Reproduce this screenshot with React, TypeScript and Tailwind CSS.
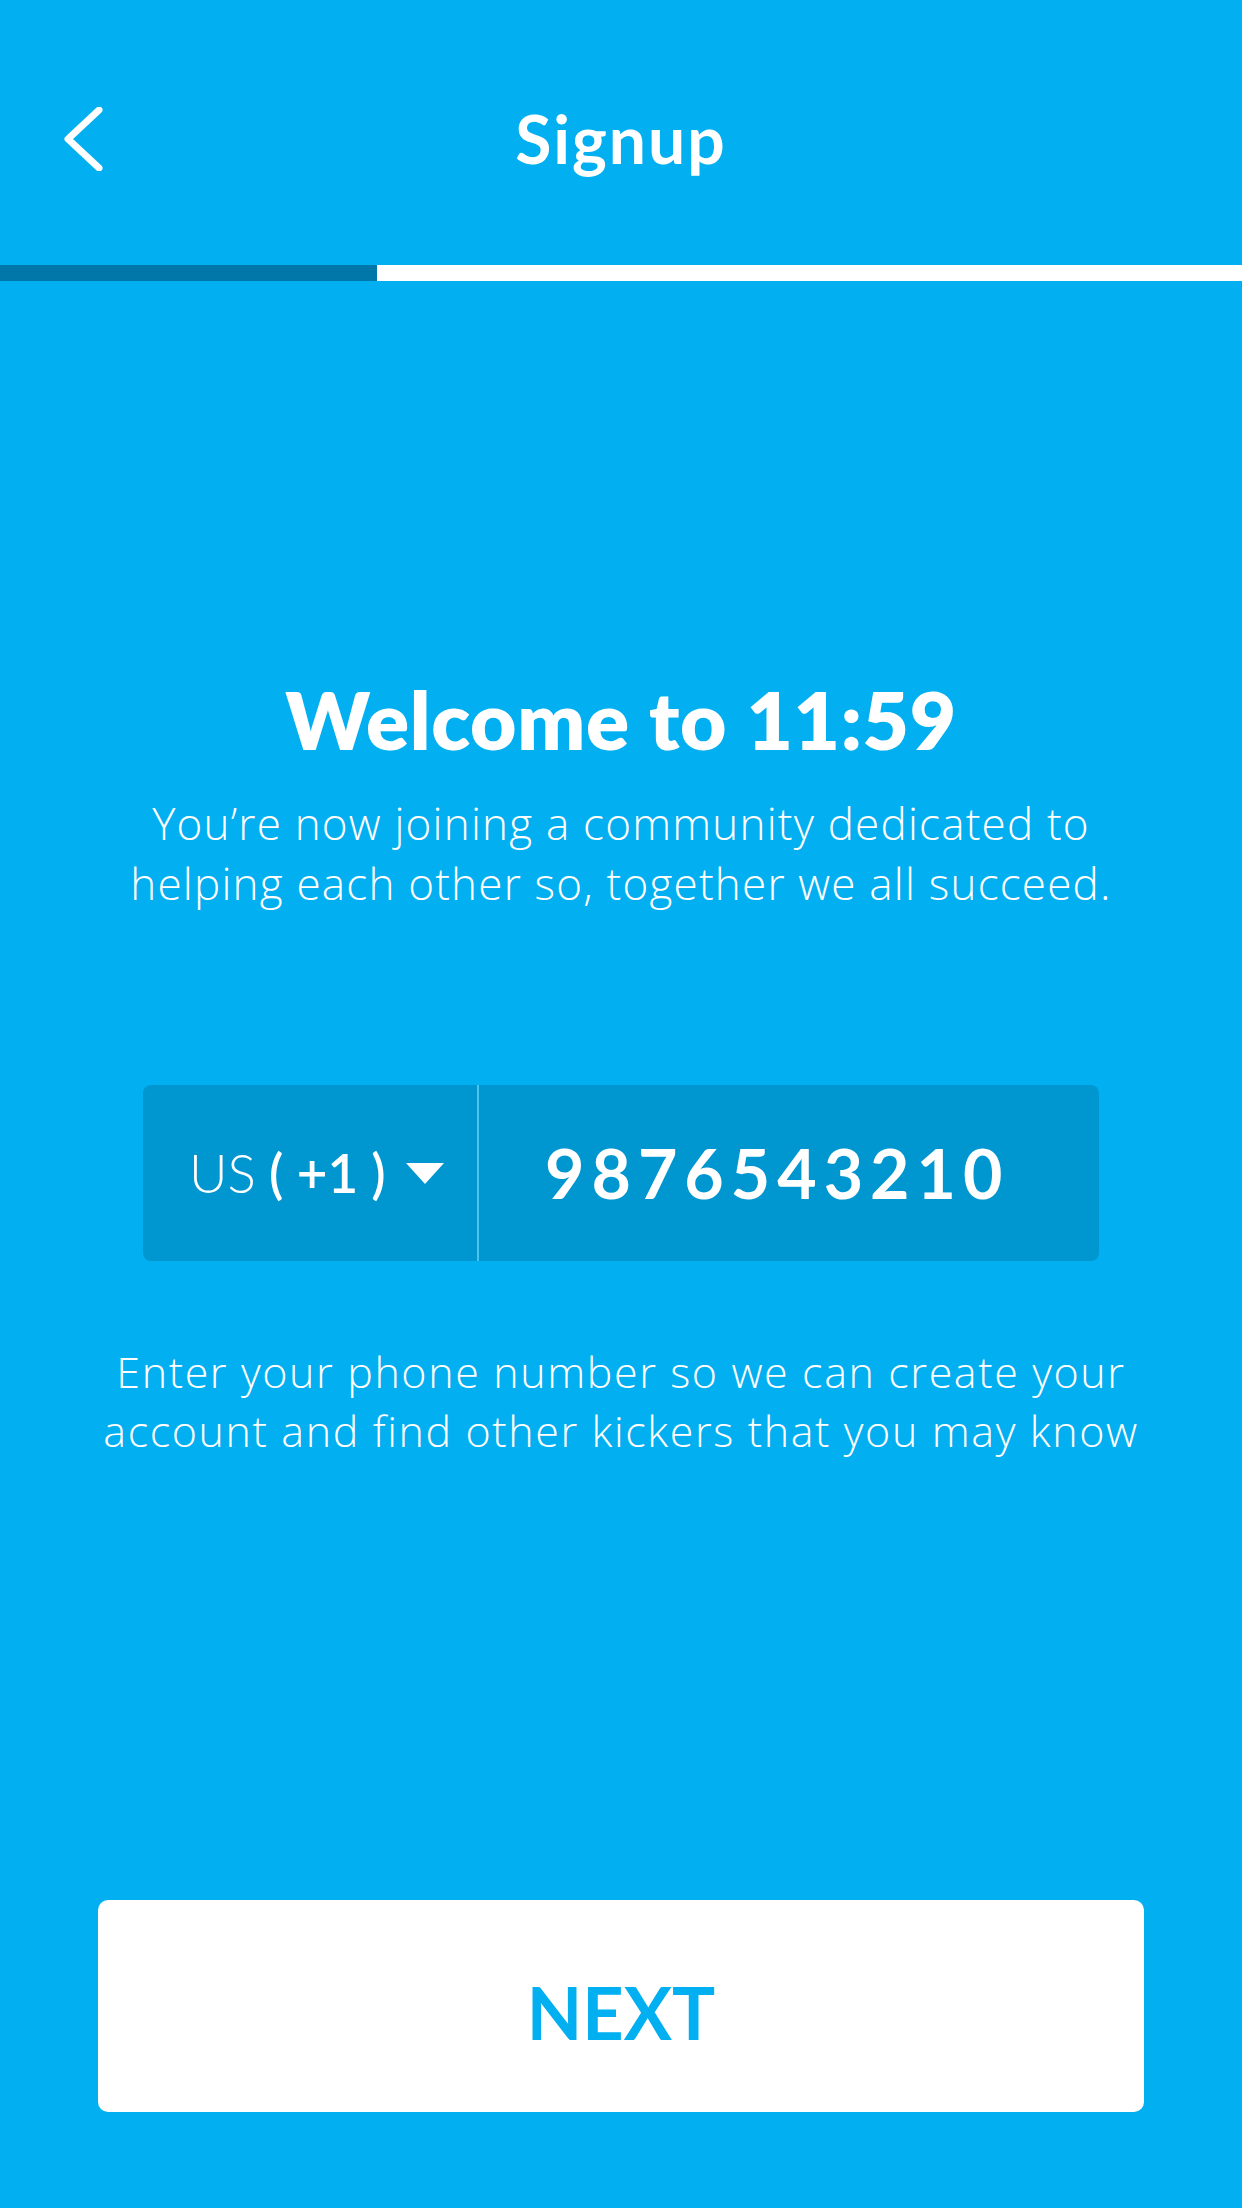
import React from "react";

export default function App() {
  return (
    <div
      className="w-[1242px] min-h-[2208px] bg-[#02aff0] flex flex-col text-white"
      style={{ fontFamily: "Lato, 'Open Sans', sans-serif" }}
    >
      {/* Header */}
      <div className="h-[265px] pt-[106px]">
        <div className="grid grid-cols-[1fr_auto_1fr] items-center h-[60px]">
          <div className="pl-[62px] flex items-center">
            <svg width="44" height="64" viewBox="0 0 44 64" fill="none">
              <polyline
                points="37,3 6,32 37,61"
                stroke="white"
                strokeWidth="7"
                strokeLinecap="round"
                strokeLinejoin="round"
              />
            </svg>
          </div>
          <div className="text-[66px] leading-[66px] font-bold tracking-[2px]">Signup</div>
          <div />
        </div>
      </div>

      {/* Progress */}
      <div className="flex h-[16px]">
        <div className="w-[377px] bg-[#0077a8]" />
        <div className="flex-1 bg-white" />
      </div>

      {/* Welcome */}
      <div className="mt-[398px] flex flex-col items-center text-center">
        <h1 className="text-[80px] leading-[80px] font-extrabold tracking-[0.7px]">Welcome to 11:59</h1>
        <p className="mt-[34px] text-[44px] leading-[60px] font-light font-['Open_Sans',sans-serif] tracking-[1.2px]">
          You’re now joining a community dedicated to
          <br />
          helping each other so, together we all succeed.
        </p>
      </div>

      {/* Phone input */}
      <div className="mt-[172px] mx-[143px] h-[176px] rounded-[8px] bg-[#0096d0] flex">
        <div className="w-[336px] flex items-center pl-[46px] border-r-2 border-[#4cc4f2]">
          <span className="text-[53px] leading-[60px] font-light">US</span>
          <span className="text-[53px] leading-[60px] font-semibold whitespace-pre"> ( +1 )</span>
          <svg className="ml-[20px]" width="38" height="21" viewBox="0 0 38 21">
            <polygon points="0,0 38,0 19,21" fill="white" />
          </svg>
        </div>
        <div className="flex-1 flex items-center pl-[66px]">
          <span className="text-[68px] leading-[70px] font-bold tracking-[7px]">9876543210</span>
        </div>
      </div>

      {/* Helper text */}
      <p className="mt-[81px] text-center text-[43px] leading-[59px] font-light font-['Open_Sans',sans-serif] tracking-[1.6px]">
        Enter your phone number so we can create your
        <br />
        account and find other kickers that you may know
      </p>

      <div className="flex-1" />

      {/* Next button */}
      <div className="px-[98px] pb-[96px]">
        <button className="w-full h-[212px] rounded-[10px] bg-white flex items-center justify-center pt-[12px]">
          <span className="text-[72px] leading-[72px] font-bold text-[#02aff0]">NEXT</span>
        </button>
      </div>
    </div>
  );
}
